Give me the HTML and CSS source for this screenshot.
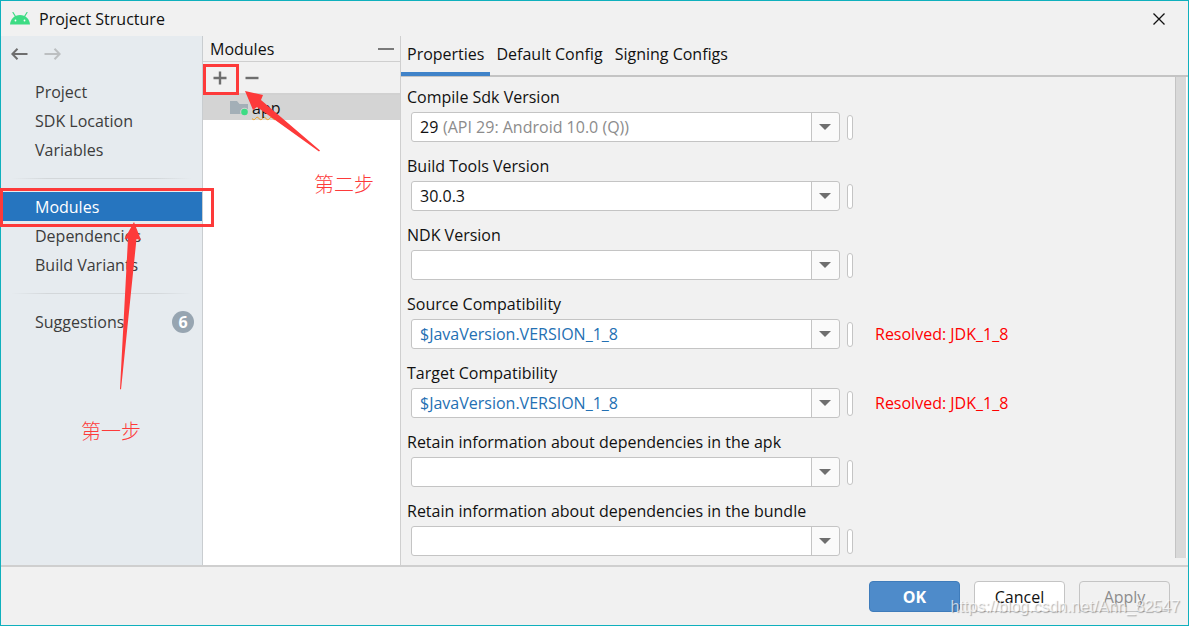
FILE: index.html
```html
<!DOCTYPE html>
<html lang="en">
<head>
<meta charset="UTF-8">
<meta name="viewport" content="width=device-width, initial-scale=1.0">
<title>Project Structure</title>
<link rel="stylesheet" href="styles.css">
</head>
<body>
<div class="window">
    <header class="titlebar">
        <svg class="android" width="20" height="13" viewBox="0 0 20 13">
            <path d="M3 0.500L5.500 4.500M17 0.500L14.500 4.500" stroke="#3ddc84" stroke-width="1.200" stroke-linecap="round"/>
            <path d="M0 12.500C0.400 7 4.500 3 10 3s9.600 4 10 9.500z" fill="#3ddc84"/>
            <circle cx="5.500" cy="8.500" r="0.900" fill="#fff"/>
            <circle cx="14.500" cy="8.500" r="0.900" fill="#fff"/>
        </svg>
        <h1>Project Structure</h1>
        <button class="close" aria-label="Close">
            <svg width="12" height="12" viewBox="0 0 12 12"><path d="M0.500 0.500l11 11M11.500 0.500l-11 11" stroke="#111" stroke-width="1.300"/></svg>
        </button>
    </header>

    <div class="main">
        <nav class="sidebar">
            <div class="history">
                <button aria-label="Back">
                    <svg width="17" height="12" viewBox="0 0 17 12"><path d="M16.500 6H1.500M6.500 0.800L1.300 6l5.200 5.200" fill="none" stroke="#6e6e6e" stroke-width="2"/></svg>
                </button>
                <button aria-label="Forward" disabled>
                    <svg width="17" height="12" viewBox="0 0 17 12"><path d="M0.500 6h15M10.500 0.800L15.700 6l-5.200 5.200" fill="none" stroke="#bcbfc1" stroke-width="2"/></svg>
                </button>
            </div>
            <a href="#">Project</a>
            <a href="#">SDK Location</a>
            <a href="#">Variables</a>
            <hr>
            <a href="#" class="selected">Modules</a>
            <a href="#">Dependencies</a>
            <a href="#">Build Variants</a>
            <hr>
            <a href="#">Suggestions <span class="count">6</span></a>
        </nav>

        <section class="modules">
            <div class="modules-head">
                <h2>Modules</h2>
                <button aria-label="Hide">
                    <svg width="16" height="4" viewBox="0 0 16 4"><path d="M0 2h16" stroke="#7a7a7a" stroke-width="2"/></svg>
                </button>
            </div>
            <div class="toolbar">
                <button aria-label="Add module">
                    <svg width="14" height="14" viewBox="0 0 14 14"><path d="M7 0.500v13M0.500 7h13" stroke="#6e6e6e" stroke-width="2.400"/></svg>
                </button>
                <button aria-label="Remove module">
                    <svg width="14" height="14" viewBox="0 0 14 14"><path d="M0.500 7h13" stroke="#6e6e6e" stroke-width="2.400"/></svg>
                </button>
            </div>
            <div class="module">
                <svg width="19" height="16" viewBox="0 0 19 16">
                    <path d="M0 1h7l2.500 3H18v10H0z" fill="#a3afb7"/>
                    <circle cx="14.500" cy="12" r="4.300" fill="#d4d4d4"/>
                    <circle cx="14.500" cy="12" r="3.300" fill="#3ddc84"/>
                </svg>
                <span class="module-name">app</span>
            </div>
        </section>

        <section class="details">
            <div class="tabs">
                <button class="active">Properties</button>
                <button>Default Config</button>
                <button>Signing Configs</button>
            </div>
            <div class="scroll">
                <form class="fields">
                    <div class="field">
                        <label for="sdk">Compile Sdk Version</label>
                        <div class="row">
                            <div class="combo">
                                <select id="sdk"><option>29</option></select>
                                <span class="hint">(API 29: Android 10.0 (Q))</span>
                            </div>
                            <button type="button" class="bind" aria-label="Bind to variable"></button>
                        </div>
                    </div>
                    <div class="field">
                        <label for="tools">Build Tools Version</label>
                        <div class="row">
                            <div class="combo"><select id="tools"><option>30.0.3</option></select></div>
                            <button type="button" class="bind" aria-label="Bind to variable"></button>
                        </div>
                    </div>
                    <div class="field">
                        <label for="ndk">NDK Version</label>
                        <div class="row">
                            <div class="combo"><select id="ndk"><option></option></select></div>
                            <button type="button" class="bind" aria-label="Bind to variable"></button>
                        </div>
                    </div>
                    <div class="field">
                        <label for="source">Source Compatibility</label>
                        <div class="row">
                            <div class="combo"><select id="source" class="variable"><option>$JavaVersion.VERSION_1_8</option></select></div>
                            <button type="button" class="bind" aria-label="Bind to variable"></button>
                            <span class="resolved">Resolved: JDK_1_8</span>
                        </div>
                    </div>
                    <div class="field">
                        <label for="target">Target Compatibility</label>
                        <div class="row">
                            <div class="combo"><select id="target" class="variable"><option>$JavaVersion.VERSION_1_8</option></select></div>
                            <button type="button" class="bind" aria-label="Bind to variable"></button>
                            <span class="resolved">Resolved: JDK_1_8</span>
                        </div>
                    </div>
                    <div class="field">
                        <label for="apk">Retain information about dependencies in the apk</label>
                        <div class="row">
                            <div class="combo"><select id="apk"><option></option></select></div>
                            <button type="button" class="bind" aria-label="Bind to variable"></button>
                        </div>
                    </div>
                    <div class="field">
                        <label for="bundle">Retain information about dependencies in the bundle</label>
                        <div class="row">
                            <div class="combo"><select id="bundle"><option></option></select></div>
                            <button type="button" class="bind" aria-label="Bind to variable"></button>
                        </div>
                    </div>
                </form>
                <div class="scrollbar"></div>
            </div>
        </section>
    </div>

    <footer class="buttons">
        <button class="ok">OK</button>
        <button>Cancel</button>
        <button disabled>Apply</button>
    </footer>

    <!-- step markers drawn over the dialog -->
    <div class="mark mark-nav"></div>
    <div class="mark mark-add"></div>
    <svg class="arrows" width="400" height="400" viewBox="0 0 400 400">
        <path d="M134 222L141 240L136.500 239L121 389.500L120 389L128 238.500L124.500 239z" fill="#fd3a3a"/>
        <path d="M245 91L263 95L261 100L320 150.500L319 151.500L257 107L253 110z" fill="#fd3a3a"/>
    </svg>
    <span class="step step-one" lang="zh">第一步</span>
    <span class="step step-two" lang="zh">第二步</span>
    <span class="watermark">https://blog.csdn.net/Ann_82547</span>
</div>
</body>
</html>
```

FILE: styles.css
```css
* {
    box-sizing: border-box;
}
body {
    margin: 0;
    background: #f1f1f1;
    color: #111;
    font-family: "Open Sans", "Noto Sans CJK SC", sans-serif;
    font-size: 16px;
    line-height: 22px;
}
button, select {
    font: inherit;
    color: inherit;
}
button {
    padding: 0;
    border: 0;
    background: none;
}
svg {
    display: block;
}
h1, h2 {
    margin: 0;
    font-size: 16px;
    font-weight: 400;
}

.window {
    position: relative;
    display: flex;
    flex-direction: column;
    min-height: 100vh;
    border: 1px solid #0fb0bd;
}
.titlebar {
    display: flex;
    align-items: center;
    height: 35px;
    padding: 0 23px 0 9px;
}
.titlebar h1 {
    flex: 1;
    margin-left: 9px;
}
.main {
    display: flex;
    flex: 1;
    border-bottom: 2px solid #cfcfcf;
}

/* left navigation */
.sidebar {
    width: 202px;
    background: #e6ebef;
    border-right: 1px solid #c9cdd0;
    color: #3c3c3c;
}
.history {
    display: flex;
    align-items: center;
    gap: 16px;
    height: 41px;
    padding: 0 10px 5px;
}
.sidebar a {
    display: flex;
    align-items: center;
    justify-content: space-between;
    height: 29px;
    padding: 0 8px 0 34px;
    color: inherit;
    text-decoration: none;
}
.sidebar a.selected {
    background: #2675bf;
    color: #fff;
}
.sidebar hr {
    height: 1px;
    margin: 14px 10px 13px;
    border: 0;
    background: linear-gradient(to right, #e6ebef, #d3d7da 20%, #d3d7da 80%, #e6ebef);
}
.count {
    width: 22px;
    height: 22px;
    border-radius: 11px;
    background: #97a5b1;
    color: #fff;
    font-weight: 700;
    text-align: center;
}

/* module list */
.modules {
    width: 198px;
    background: #fff;
    border-right: 1px solid #cfcfcf;
}
.modules-head {
    display: flex;
    align-items: center;
    justify-content: space-between;
    height: 26px;
    padding: 0 6px 0 7px;
    background: #f1f1f1;
    border-bottom: 1px solid #cfcfcf;
}
.toolbar {
    display: flex;
    align-items: center;
    gap: 18px;
    height: 33px;
    padding: 0 10px;
    background: #f1f1f1;
    border-bottom: 2px solid #d1d1d1;
}
.module {
    display: flex;
    align-items: center;
    gap: 3px;
    height: 25px;
    padding-left: 27px;
    background: #d4d4d4;
}
.module-name {
    text-decoration: underline wavy #f0a020 1px;
    text-decoration-skip-ink: none;
    text-underline-offset: 2px;
}

/* properties */
.details {
    display: flex;
    flex: 1;
    flex-direction: column;
}
.tabs {
    display: flex;
    height: 41px;
    border-bottom: 2px solid #c4c4c4;
}
.tabs button {
    height: 40px;
    padding: 0 6px;
    border-bottom: 4px solid transparent;
}
.tabs .active {
    border-color: #4083c9;
}
.scroll {
    display: flex;
    flex: 1;
}
.fields {
    display: flex;
    flex: 1;
    flex-direction: column;
    gap: 13px;
    padding: 9px 6px;
}
.field label {
    display: block;
    margin-bottom: 4px;
}
.row {
    display: flex;
    align-items: center;
    padding-left: 4px;
}
.combo {
    position: relative;
    width: 429px;
}
.combo select {
    display: block;
    width: 100%;
    height: 30px;
    padding: 0 36px 0 8px;
    border: 1px solid #c4c4c4;
    border-radius: 3px;
    background: linear-gradient(to right, #c4c4c4 1px, #fafafa 1px) right / 28px 100% no-repeat #fff;
    appearance: none;
}
.combo select.variable {
    color: #2470b3;
}
.combo::after {
    content: "";
    position: absolute;
    top: 12px;
    right: 9px;
    border: 6px solid transparent;
    border-top-color: #6e6e6e;
    border-bottom: 0;
}
.hint {
    position: absolute;
    top: 4px;
    left: 32px;
    color: #8c8c8c;
    pointer-events: none;
}
.row .bind {
    width: 6px;
    height: 25px;
    margin-left: 7px;
    border: 1px solid #c4c4c4;
    border-radius: 3px;
    background: #fff;
}
.resolved {
    margin-left: 22px;
    color: #f00;
}
.scrollbar {
    width: 12px;
    margin: 0 1px 7px 0;
    border-left: 1px solid #c4c4c4;
    border-right: 1px solid #fff;
    background: #d9d9d9;
}

/* bottom buttons */
.buttons {
    display: flex;
    justify-content: flex-end;
    gap: 14px;
    padding: 14px 18px 13px;
}
.buttons button {
    width: 91px;
    height: 31px;
    border: 1px solid #c4c4c4;
    border-radius: 4px;
    background: #fff;
}
.buttons .ok {
    border-color: #3f7cbb;
    background: #4e8bca;
    color: #fff;
    font-weight: 700;
}
.buttons button:disabled {
    background: none;
    color: #8c8c8c;
}

/* step markers */
.mark {
    position: absolute;
    border: 3px solid #fd3a3a;
}
.mark-nav {
    top: 187px;
    left: -1px;
    width: 214px;
    height: 39px;
}
.mark-add {
    top: 63px;
    left: 202px;
    width: 36px;
    height: 31px;
}
.arrows {
    position: absolute;
    top: -1px;
    left: -1px;
    pointer-events: none;
}
.step {
    position: absolute;
    color: #fd3a3a;
    font-family: "Noto Sans CJK SC", sans-serif;
    font-size: 20px;
    font-weight: 300;
    line-height: 24px;
}
.step-one {
    top: 418px;
    left: 80px;
}
.step-two {
    top: 171px;
    left: 313px;
}
.watermark {
    position: absolute;
    right: 8px;
    bottom: 7px;
    color: rgba(255, 255, 255, 0.7);
    font-family: "Liberation Sans", sans-serif;
    text-shadow: 1px 1px 1px rgba(0, 0, 0, 0.3);
}
```
